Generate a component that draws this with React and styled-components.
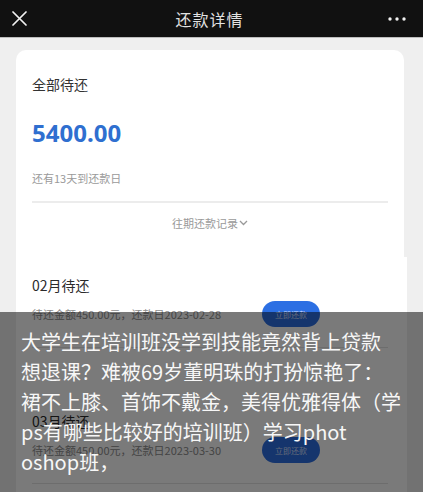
import React from "react";
import styled, { createGlobalStyle } from "styled-components";

const GlobalStyle = createGlobalStyle`
  html, body {
    margin: 0;
    padding: 0;
    background: #efefef;
    font-family: "Noto Sans CJK SC", "Noto Sans", sans-serif;
  }
`;

const bills = [
  { month: "02", date: "2023-02-28" },
  { month: "03", date: "2023-03-30" },
];

const caption = [
  "大学生在培训班没学到技能竟然背上贷款",
  "想退课？难被69岁董明珠的打扮惊艳了：",
  "裙不上膝、首饰不戴金，美得优雅得体（学",
  "ps有哪些比较好的培训班）学习phot",
  "oshop班，",
];

const App = () => {
  return (
    <>
      <GlobalStyle />
      <StPage>
        <StTopBar>
          <StIconBtn aria-label="close">
            <svg width="15" height="15" viewBox="0 0 15 15">
              <path d="M1 1 L14 14 M14 1 L1 14" stroke="#f2f2f2" strokeWidth="1.7" strokeLinecap="round" />
            </svg>
          </StIconBtn>
          <StTitle>还款详情</StTitle>
          <StIconBtn aria-label="more">
            <svg width="18" height="4" viewBox="0 0 18 4">
              <circle cx="2" cy="2" r="1.7" fill="#f2f2f2" />
              <circle cx="9" cy="2" r="1.7" fill="#f2f2f2" />
              <circle cx="16" cy="2" r="1.7" fill="#f2f2f2" />
            </svg>
          </StIconBtn>
        </StTopBar>

        <StBody>
          <StSummaryCard>
            <StLabel>全部待还</StLabel>
            <StAmount>5400.00</StAmount>
            <StHint>还有13天到还款日</StHint>
            <StDivider />
            <StHistory>
              往期还款记录
              <svg width="9" height="6" viewBox="0 0 9 6">
                <path d="M1 1 L4.5 4.5 L8 1" stroke="#999" strokeWidth="1.3" fill="none" />
              </svg>
            </StHistory>
          </StSummaryCard>

          <StBillCard>
            {bills.map((bill) => (
              <StBillRow key={bill.month}>
                <StBillTitle>{bill.month}月待还</StBillTitle>
                <StBillDetail>待还金额450.00元，还款日{bill.date}</StBillDetail>
                <StPayButton>立即还款</StPayButton>
              </StBillRow>
            ))}
          </StBillCard>
        </StBody>

        <StCaption>
          {caption.map((line) => (
            <StCaptionLine key={line}>{line}</StCaptionLine>
          ))}
        </StCaption>
      </StPage>
    </>
  );
};

export default App;

const StPage = styled.div`
  position: relative;
  width: 423px;
  height: 492px;
  overflow: hidden;
  background: #efefef;
`;

const StTopBar = styled.div`
  height: 37px;
  background: #111111;
  border-bottom: 1px solid #bdbdbd;
  display: flex;
  align-items: center;
  justify-content: space-between;
  padding: 0 17px 0 12px;
`;

const StIconBtn = styled.div`
  display: flex;
  align-items: center;
  height: 20px;
`;

const StTitle = styled.div`
  color: #e2e2e2;
  font-size: 16px;
  letter-spacing: 1px;
  padding-left: 4px;
`;

const StBody = styled.div`
  padding-top: 12px;
  display: flex;
  flex-direction: column;
`;

const StSummaryCard = styled.div`
  margin: 0 19px 0 16px;
  background: #fff;
  border-radius: 10px 10px 0 0;
  padding: 24px 16px 26px;
  display: flex;
  flex-direction: column;
`;

const StLabel = styled.div`
  font-size: 14px;
  line-height: 20px;
  color: #333;
`;

const StAmount = styled.div`
  margin-top: 24px;
  font-family: "Noto Sans", sans-serif;
  font-size: 24px;
  font-weight: 700;
  line-height: 30px;
  color: #2f6fd0;
`;

const StHint = styled.div`
  margin-top: 22px;
  font-size: 11px;
  line-height: 16px;
  color: #9a9a9a;
`;

const StDivider = styled.div`
  margin-top: 15px;
  height: 2px;
  background: #ececec;
`;

const StHistory = styled.div`
  margin-top: 12px;
  display: flex;
  align-items: center;
  justify-content: center;
  gap: 1px;
  font-size: 11px;
  line-height: 16px;
  color: #9a9a9a;
`;

const StBillCard = styled.div`
  margin: 0 16px;
  background: #fff;
  padding: 0 19px 0 16px;
  height: 260px;
`;

const StBillRow = styled.div`
  display: grid;
  grid-template-columns: 230px 58px;
  align-items: center;
  row-gap: 5px;
  padding: 62px 0 20px;
  border-bottom: 1px solid #e4e4e4;

  &:first-child {
    padding-top: 17px;
  }
`;

const StBillTitle = styled.div`
  grid-column: 1 / 3;
  font-size: 14px;
  line-height: 22px;
  color: #2b2b2b;
`;

const StBillDetail = styled.div`
  font-size: 11px;
  line-height: 16px;
  color: #8e8e8e;
  white-space: nowrap;
`;

const StPayButton = styled.div`
  height: 26px;
  border-radius: 13px;
  background: #2c6fe3;
  color: #cfdfff;
  font-size: 8px;
  display: flex;
  align-items: center;
  justify-content: center;
`;

const StCaption = styled.div`
  position: absolute;
  left: 0;
  right: 0;
  top: 312px;
  bottom: 0;
  background: rgba(0, 0, 0, 0.52);
  padding: 15px 0 0 21px;
  color: #f7f7f7;
  font-size: 20px;
  line-height: 30px;
`;

const StCaptionLine = styled.div`
  white-space: nowrap;
`;
